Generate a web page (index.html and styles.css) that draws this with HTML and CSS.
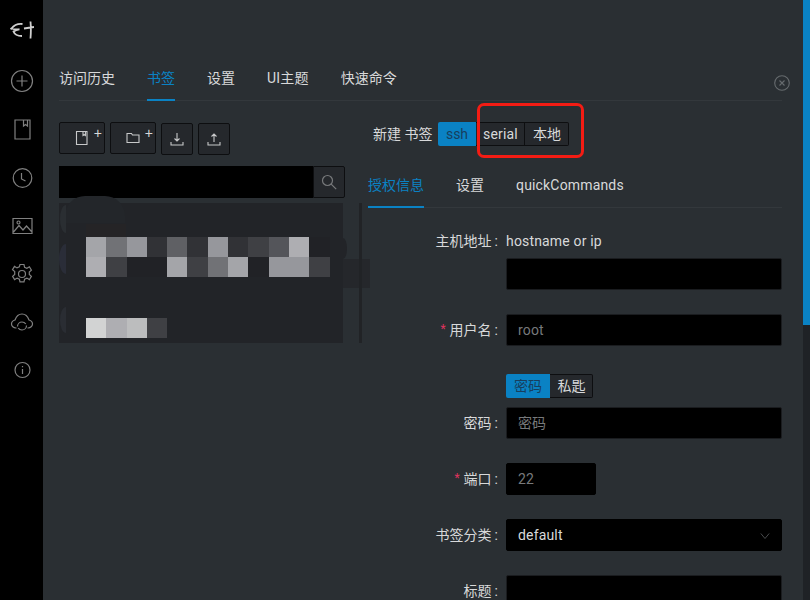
FILE: index.html
```html
<!DOCTYPE html>
<html lang="zh-CN">
<head>
<meta charset="utf-8">
<title>书签</title>
<link rel="stylesheet" href="styles.css">
</head>
<body>
<aside class="sidebar">
  <svg class="logo" viewBox="0 0 24 24"><path d="M12.500 6C8 5.500 4.500 6.500 1.500 10.500c2.500 1 5 1.200 8 .8-2.500.2-4.500 1-6 2.200 1 2.800 3.800 4.500 8.500 4.500M1.500 10.500l-1 .8"/><path d="M14 10.500l10-1.500M20.500 3.500c.5 5.500.5 11 0 17"/></svg>
  <svg class="ico ico-first" viewBox="0 0 24 24"><circle cx="12" cy="12" r="10.500"/><path d="M12 6.500v11M6.500 12h11"/></svg>
  <svg class="ico" viewBox="0 0 24 24"><path d="M5 2h15v19H5zM13.500 2v6l2-1.500 2 1.500V2"/></svg>
  <svg class="ico" viewBox="0 0 24 24"><circle cx="12.500" cy="12" r="9.300"/><path d="M11.500 7v6l4 2"/></svg>
  <svg class="ico" viewBox="0 0 24 24"><path d="M3 4.500h19v15H3zM3.500 18L9 11.500l4 4.500 3.500-4 5 5.500"/><circle cx="8.500" cy="8.500" r="1.500"/></svg>
  <svg class="ico" viewBox="0 0 24 24"><path d="M10 2.500h4l.6 2.800 2.300 1 2.500-1.500 2 3.300-2.100 1.900v2.400l2.100 1.900-2 3.300-2.500-1.500-2.300 1-.6 2.800h-4l-.6-2.800-2.300-1-2.500 1.500-2-3.300 2.100-1.900V9.600L2.500 7.700l2-3.300L7 5.900l2.300-1z"/><circle cx="12" cy="12" r="3.500"/></svg>
  <svg class="ico" viewBox="0 0 24 24"><path d="M6.500 18H6c-2.500 0-4.500-2-4.500-4s1.500-3.500 3.500-4C6 7 8.500 4 12 4s6 3 7 6c2 .5 3.500 2 3.500 4s-2 4-4.500 4h-.5"/><path d="M7.500 16.500c0-2.500 2-4.500 4.500-4.500 1.500 0 3 .8 3.800 2M16.500 15.500c0 2.500-2 4.500-4.500 4.500-1.500 0-3-.8-3.800-2"/></svg>
  <svg class="ico" viewBox="0 0 24 24"><circle cx="12.500" cy="12" r="7.500"/><path d="M12.500 11v5M12.500 8v1.200"/></svg>
</aside>

<main class="main">
  <nav class="tabs">
    <span class="tab">访问历史</span>
    <span class="tab tab-on">书签</span>
    <span class="tab">设置</span>
    <span class="tab latin-ui">UI主题</span>
    <span class="tab">快速命令</span>
  </nav>
  <svg class="close" viewBox="0 0 16 16"><circle cx="8" cy="8" r="7.300"/><path d="M5.500 5.500l5 5M10.500 5.500l-5 5"/></svg>

  <div class="columns">
    <section class="left">
      <div class="toolbar">
        <button class="tool tool-wide">
          <svg class="tool-ico" viewBox="0 0 14 14"><path d="M1.500 .5h10.500v13H1.500zM8 .5v4l1.200-.8 1.200 .8v-4"/></svg><span class="plus">+</span>
        </button>
        <button class="tool tool-wide">
          <svg class="tool-ico" viewBox="0 0 14 14"><path d="M1 2.500h4.500l1 1.500h6.500v7.500H1z"/></svg><span class="plus">+</span>
        </button>
        <button class="tool tool-low">
          <svg class="tool-ico" viewBox="0 0 14 14"><path d="M7 1v8M4.500 6.500L7 9l2.500-2.500M1 10v3h12v-3"/></svg>
        </button>
        <button class="tool tool-low">
          <svg class="tool-ico" viewBox="0 0 14 14"><path d="M7 10V2M4.500 4.500L7 2l2.500 2.500M1 10v3h12v-3"/></svg>
        </button>
      </div>
      <div class="search">
        <div class="search-input"></div>
        <button class="search-btn">
          <svg class="search-ico" viewBox="0 0 16 16"><circle cx="6.500" cy="6.500" r="5"/><path d="M10.200 10.200l5 5"/></svg>
        </button>
      </div>
      <div class="mosaic">
        <div class="blob blob-a"></div>
        <div class="blob blob-b"></div>
        <div class="blob blob-c"></div>
        <div class="blob blob-d"></div>
        <div class="blob blob-e"></div>
        <div class="blob blob-f"></div>
        <div class="blob blob-g"></div>
        <div class="strip"></div>
        <div class="cells cells-first">
          <i class="s10"></i><i class="s6"></i><i class="s9"></i><i class="s2"></i><i class="s5"></i><i class="s2"></i><i class="s9"></i><i class="s2"></i><i class="s3"></i><i class="s4"></i><i class="s11"></i><i class="s1"></i>
          <i class="s11"></i><i class="s3"></i><i class="s1"></i><i class="s1"></i><i class="s10"></i><i class="s3"></i><i class="s6"></i><i class="s10"></i><i class="s1"></i><i class="s9"></i><i class="s9"></i><i class="s3"></i>
        </div>
        <div class="cells cells-last">
          <i class="s13"></i><i class="s11"></i><i class="s12"></i><i class="s3"></i>
        </div>
      </div>
    </section>

    <section class="right">
      <div class="newbar">
        <span class="newlabel">新建 书签</span>
        <div class="seg">
          <span class="seg-item seg-on seg-ssh">ssh</span>
          <span class="seg-item seg-serial">serial</span>
          <span class="seg-item seg-local">本地</span>
        </div>
        <div class="redbox"></div>
      </div>
      <nav class="subtabs">
        <span class="tab tab-on">授权信息</span>
        <span class="tab">设置</span>
        <span class="tab latin">quickCommands</span>
      </nav>
      <form class="form">
        <div class="row row-host">
          <label class="lab">主机地址<span class="colon">:</span></label>
          <span class="plain latin">hostname or ip</span>
        </div>
        <div class="row row-after">
          <span class="lab"></span>
          <div class="field"></div>
        </div>
        <div class="row">
          <label class="lab"><em class="req">*</em>用户名<span class="colon">:</span></label>
          <div class="field ph latin">root</div>
        </div>
        <div class="row row-seg">
          <span class="lab"></span>
          <div class="seg">
            <span class="seg-item seg-on seg-pw">密码</span>
            <span class="seg-item seg-key">私匙</span>
          </div>
        </div>
        <div class="row row-tight">
          <label class="lab">密码<span class="colon">:</span></label>
          <div class="field ph">密码</div>
        </div>
        <div class="row">
          <label class="lab"><em class="req">*</em>端口<span class="colon">:</span></label>
          <div class="field field-port ph latin">22</div>
        </div>
        <div class="row">
          <label class="lab">书签分类<span class="colon">:</span></label>
          <div class="field field-select latin">default
            <svg class="caret" viewBox="0 0 12 8"><path d="M1 1l5 6 5-6"/></svg>
          </div>
        </div>
        <div class="row">
          <label class="lab">标题<span class="colon">:</span></label>
          <div class="field"></div>
        </div>
      </form>
    </section>
  </div>
</main>

<div class="scrollbar"><div class="thumb"></div></div>
</body>
</html>
```

FILE: styles.css
```css
* { box-sizing: border-box; }
html, body { height: 100%; }
body {
  margin: 0;
  height: 600px;
  overflow: hidden;
  display: flex;
  background: #2a2f33;
  color: #d8d9da;
  font: 14px/22px Roboto, "Noto Sans CJK SC", sans-serif;
}
.latin { letter-spacing: .17px; }
.latin-ui { letter-spacing: .2px; }

/* sidebar */
.sidebar {
  width: 43px;
  flex: none;
  background: #000;
  display: flex;
  flex-direction: column;
  align-items: center;
}
.logo {
  width: 24px;
  height: 24px;
  margin: 18px 0 15px;
  fill: none;
  stroke: #cfcfcf;
  stroke-width: 1.800;
}
.ico {
  width: 24px;
  height: 24px;
  margin: 12px 0;
  fill: none;
  stroke: #808080;
  stroke-width: 1.200;
}
.ico-first { margin-bottom: 13px; }

/* main */
.main {
  position: relative;
  flex: 1;
  min-width: 0;
  height: 600px;
  overflow: hidden;
  padding: 67px 21px 0 16px;
}
.tabs {
  display: flex;
  gap: 32px;
  border-bottom: 1px solid #33383c;
  height: 34px;
}
.tab {
  position: relative;
  height: 34px;
  color: #d8d9da;
}
.tab-on { color: #0a82c4; }
.tab-on::after {
  content: "";
  position: absolute;
  left: 0;
  right: 0;
  bottom: 0;
  height: 2px;
  background: #0a82c4;
}
.close {
  position: absolute;
  left: 731px;
  top: 75px;
  width: 16px;
  height: 16px;
  fill: none;
  stroke: #666b6e;
  stroke-width: 1.100;
}
.columns { display: flex; gap: 23px; }

/* left */
.left { width: 286px; flex: none; }
.toolbar {
  display: flex;
  align-items: flex-start;
  gap: 5px;
  padding-top: 21px;
}
.tool {
  position: relative;
  height: 32px;
  width: 32px;
  padding: 0;
  display: flex;
  align-items: center;
  justify-content: center;
  background: #25282c;
  border: 1px solid #0d0e10;
  border-radius: 2px;
}
.tool-wide { width: 46px; }
.tool-low { margin-top: 1px; }
.tool-ico {
  width: 14px;
  height: 14px;
  fill: none;
  stroke: #c8c9ca;
  stroke-width: 1.100;
}
.plus {
  position: absolute;
  right: 2px;
  top: 3px;
  font-size: 14px;
  line-height: 14px;
  color: #d8d9da;
}
.search {
  display: flex;
  height: 32px;
  margin-top: 11px;
}
.search-input { flex: 1; background: #000; }
.search-btn {
  width: 32px;
  padding: 0;
  background: #25282c;
  border: 1px solid #0d0e10;
  border-radius: 0 2px 2px 0;
  display: flex;
  align-items: center;
  justify-content: center;
}
.search-ico {
  width: 16px;
  height: 16px;
  fill: none;
  stroke: #77797b;
  stroke-width: 1.200;
}

/* pixelated block */
.mosaic {
  position: relative;
  width: 284px;
  height: 140px;
  margin-top: 5px;
  background: #222428;
  padding: 34px 0 0 27px;
}
.blob { position: absolute; }
.blob-a { left: 6px; top: -7px; width: 60px; height: 27px; border-radius: 20px 20px 0 0; background: #23262a; }
.blob-b { left: 0; top: 41px; width: 7px; height: 30px; border-radius: 7px 0 0 7px / 15px 0 0 15px; background: #2a2d38; }
.blob-c { left: 284px; top: 56px; width: 27px; height: 29px; background: #25272b; }
.blob-d { left: 27px; top: 21px; width: 40px; height: 13px; background: #252426; }
.blob-e { left: 1px; top: 2px; width: 6px; height: 28px; border-radius: 6px 0 0 6px / 14px 0 0 14px; background: #2a2e32; }
.blob-f { left: 1px; top: 104px; width: 6px; height: 26px; border-radius: 6px 0 0 6px / 13px 0 0 13px; background: #2a2d33; }
.blob-g { left: 284px; top: 35px; width: 4px; height: 21px; border-radius: 0 4px 4px 0 / 0 10px 10px 0; background: #222428; }
.strip {
  position: absolute;
  left: 300px;
  top: 0;
  width: 3px;
  height: 140px;
  background: #212326;
}
.cells {
  position: relative;
  display: grid;
  grid-template-columns: repeat(12, 20.300px);
  grid-auto-rows: 20px;
}
.cells-last { margin-top: 41px; }
.s1 { background: #212226; }
.s2 { background: #313236; }
.s3 { background: #3f4044; }
.s4 { background: #54555a; }
.s5 { background: #5f6064; }
.s6 { background: #717276; }
.s9 { background: #96979c; }
.s10 { background: #a4a5a9; }
.s11 { background: #aeaeb2; }
.s12 { background: #bcbdbe; }
.s13 { background: #d2d3d3; }

/* right */
.right { flex: 1; min-width: 0; }
.newbar {
  position: relative;
  display: flex;
  align-items: flex-start;
  padding: 21px 0 0 5px;
}
.newlabel { width: 65px; line-height: 24px; }
.seg { display: flex; height: 24px; }
.seg-item {
  line-height: 22px;
  text-align: center;
  background: #25282c;
  border: 1px solid #0d0e10;
  border-left-width: 0;
  color: #d8d9da;
}
.seg-item:last-child { border-radius: 0 2px 2px 0; padding-left: 1px; }
.seg-on {
  background: #0a82c4;
  border: 0;
  line-height: 24px;
  color: #173f5e;
  border-radius: 2px 0 0 2px;
}
.seg-ssh { width: 38px; }
.seg-serial { width: 49px; letter-spacing: .17px; padding-left: 1px; }
.seg-local { width: 44px; }
.seg-pw { width: 44px; }
.seg-key { width: 43px; }
.redbox {
  position: absolute;
  left: 109px;
  top: 2px;
  width: 107px;
  height: 55px;
  border: 3px solid #f41c14;
  border-radius: 7px;
}
.subtabs {
  display: flex;
  gap: 32px;
  margin-top: 28px;
  height: 34px;
  border-bottom: 1px solid #33383c;
}

/* form */
.form { padding-top: 22px; }
.row { display: flex; margin-bottom: 24px; }
.row-host { margin-bottom: 6px; height: 22px; }
.row-seg { margin: 28px 0 9px; }
.lab {
  width: 130px;
  flex: none;
  margin-right: 8px;
  text-align: right;
  line-height: 32px;
  color: #d8d9da;
}
.colon { margin-left: 3px; }
.row-host .lab { line-height: 22px; }
.req {
  font-style: normal;
  font-size: 12px;
  line-height: 0;
  position: relative;
  top: -2px;
  color: #e0345f;
  margin-right: 4px;
}
.plain { line-height: 22px; }
.field {
  flex: 1;
  height: 32px;
  padding: 0 11px;
  line-height: 31px;
  background: #000;
  border: 1px solid #1a1c1f;
  border-radius: 2px;
}
.ph { color: #77797b; }
.field-port { flex: none; width: 90px; border-color: #000; }
.field-select {
  position: relative;
  border-color: #000;
  color: #d8d9da;
}
.caret {
  position: absolute;
  right: 11px;
  top: 12px;
  width: 10px;
  height: 8px;
  fill: none;
  stroke: #55585a;
  stroke-width: 1;
}

/* scrollbar */
.scrollbar {
  width: 7px;
  flex: none;
  background: #1f2226;
}
.thumb { height: 325px; background: #0a82c4; }
```
